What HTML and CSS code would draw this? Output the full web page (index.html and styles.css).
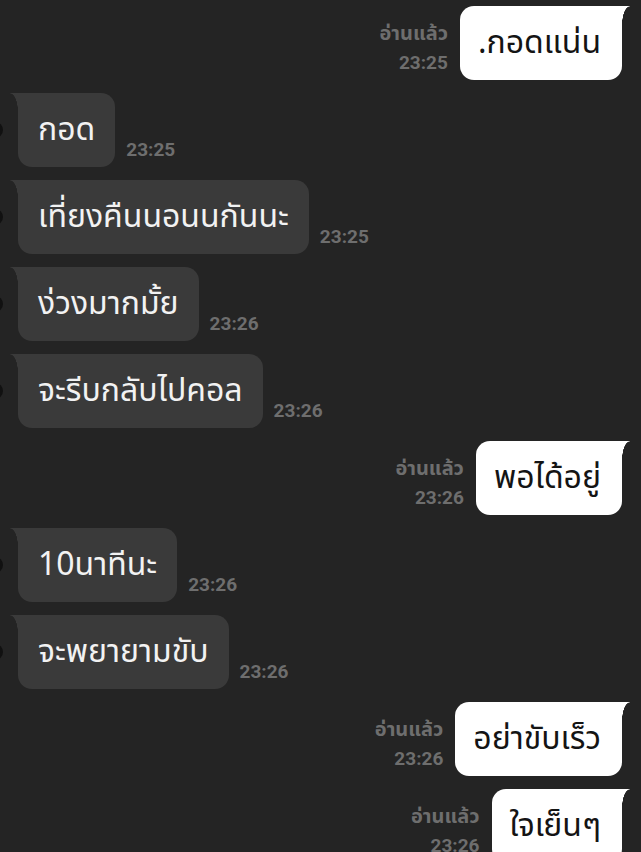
FILE: index.html
```html
<!DOCTYPE html>
<html lang="th">
<head>
<meta charset="UTF-8">
<meta name="viewport" content="width=device-width, initial-scale=1.0">
<title>Chat</title>
<link rel="stylesheet" href="styles.css">
</head>
<body>

<div class="chat">
  <div class="row out">
    <div class="meta"><span>อ่านแล้ว</span><span>23:25</span></div>
    <div class="bubble">.กอดแน่น</div>
  </div>

  <div class="row in">
    <span class="avatar"></span>
    <div class="bubble">กอด</div>
    <div class="meta"><span>23:25</span></div>
  </div>

  <div class="row in">
    <span class="avatar"></span>
    <div class="bubble">เที่ยงคืนนอนนกันนะ</div>
    <div class="meta"><span>23:25</span></div>
  </div>

  <div class="row in">
    <span class="avatar"></span>
    <div class="bubble">ง่วงมากมั้ย</div>
    <div class="meta"><span>23:26</span></div>
  </div>

  <div class="row in">
    <span class="avatar"></span>
    <div class="bubble">จะรีบกลับไปคอล</div>
    <div class="meta"><span>23:26</span></div>
  </div>

  <div class="row out">
    <div class="meta"><span>อ่านแล้ว</span><span>23:26</span></div>
    <div class="bubble">พอได้อยู่</div>
  </div>

  <div class="row in">
    <span class="avatar"></span>
    <div class="bubble">10นาทีนะ</div>
    <div class="meta"><span>23:26</span></div>
  </div>

  <div class="row in">
    <span class="avatar"></span>
    <div class="bubble">จะพยายามขับ</div>
    <div class="meta"><span>23:26</span></div>
  </div>

  <div class="row out">
    <div class="meta"><span>อ่านแล้ว</span><span>23:26</span></div>
    <div class="bubble">อย่าขับเร็ว</div>
  </div>

  <div class="row out">
    <div class="meta"><span>อ่านแล้ว</span><span>23:26</span></div>
    <div class="bubble">ใจเย็นๆ</div>
  </div>
</div>

</body>
</html>
```

FILE: styles.css
```css
body {
  margin: 0;
  padding: 0;
  background: #242424;
  font-family: "Noto Sans", "Noto Sans Thai", sans-serif;
  overflow: hidden;
}

.chat {
  display: flex;
  flex-direction: column;
  gap: 13px;
  padding: 6px 19px 0 18px;
}

.row {
  display: flex;
  align-items: flex-end;
  gap: 11px;
  position: relative;
}

.row.out {
  justify-content: flex-end;
  gap: 12px;
}

.bubble {
  position: relative;
  height: 74px;
  box-sizing: border-box;
  padding: 0 20px;
  display: flex;
  align-items: center;
  font-size: 32px;
  border-radius: 14px;
  white-space: nowrap;
}

.in .bubble {
  background: #3a3a3a;
  color: #f2f2f2;
  border-top-left-radius: 0;
}

.out .bubble {
  background: #fff;
  color: #141414;
  padding: 0 21px 0 18px;
  border-top-right-radius: 0;
}

/* little tail at the top corner */
.in .bubble::before,
.out .bubble::before {
  content: "";
  position: absolute;
  top: 0;
  width: 8px;
  height: 18px;
}

.in .bubble::before {
  left: -8px;
  background: radial-gradient(8px 18px at 0 100%, transparent 96%, #3a3a3a 100%);
}

.out .bubble::before {
  right: -8px;
  background: radial-gradient(8px 18px at 100% 100%, transparent 96%, #fff 100%);
}

.meta {
  display: flex;
  flex-direction: column;
  align-items: flex-end;
  font-family: Roboto, "Noto Sans", "Noto Sans Thai", sans-serif;
  font-weight: 700;
  font-size: 19px;
  line-height: 30px;
  color: #6e6e6e;
  margin-bottom: 2px;
}

.out .meta span:first-child {
  font-size: 20px;
}

.avatar {
  position: absolute;
  left: -35px;
  top: 29px;
  width: 20px;
  height: 16px;
  border-radius: 8px;
  background: #111;
}
```
